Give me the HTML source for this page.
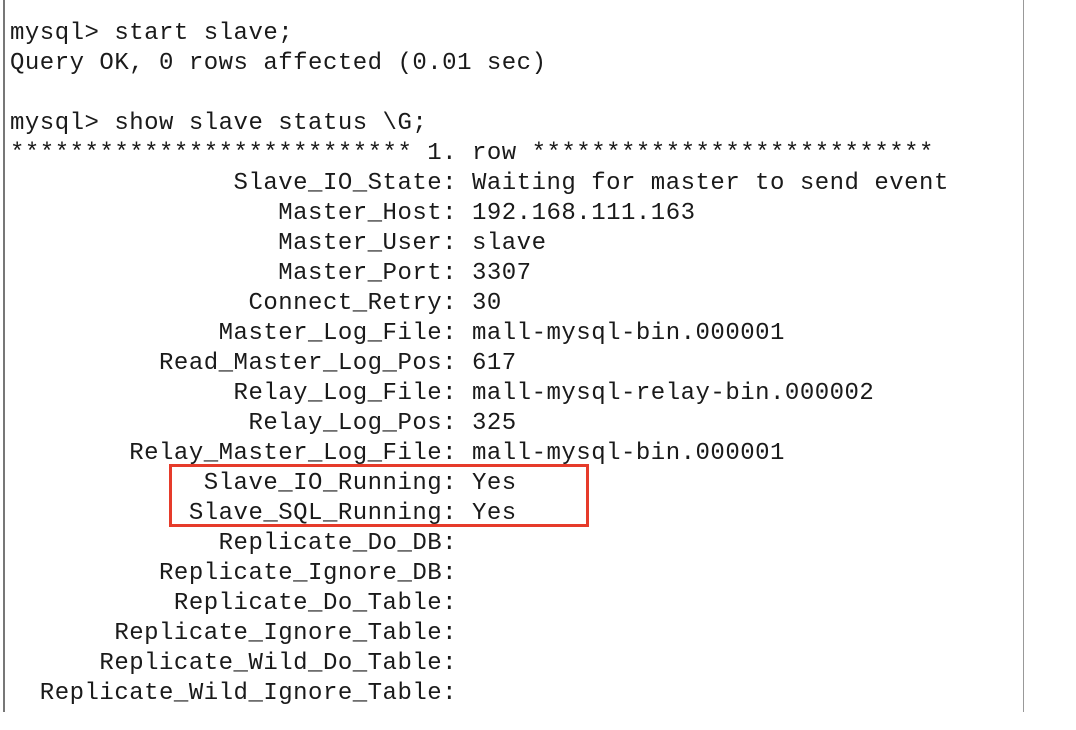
<!DOCTYPE html>
<html><head><style>
html,body{margin:0;padding:0;background:#fff;width:1076px;height:730px;overflow:hidden}
.frame{position:absolute;left:3px;top:0;width:1018px;height:712px;border-left:2px solid #777;border-right:1px solid #999;overflow:hidden}
pre{position:absolute;left:5px;top:19px;margin:0;font-family:"Liberation Mono","DejaVu Sans Mono",monospace;font-size:24px;letter-spacing:0.5px;line-height:30px;color:#1a1a1a}
.box{position:absolute;left:169px;top:464px;width:414px;height:57px;border:3px solid #e63b2a}
</style></head><body>
<div class="frame"><pre>mysql&gt; start slave;
Query OK, 0 rows affected (0.01 sec)

mysql&gt; show slave status \G;
*************************** 1. row ***************************
               Slave_IO_State: Waiting for master to send event
                  Master_Host: 192.168.111.163
                  Master_User: slave
                  Master_Port: 3307
                Connect_Retry: 30
              Master_Log_File: mall-mysql-bin.000001
          Read_Master_Log_Pos: 617
               Relay_Log_File: mall-mysql-relay-bin.000002
                Relay_Log_Pos: 325
        Relay_Master_Log_File: mall-mysql-bin.000001
             Slave_IO_Running: Yes
            Slave_SQL_Running: Yes
              Replicate_Do_DB:
          Replicate_Ignore_DB:
           Replicate_Do_Table:
       Replicate_Ignore_Table:
      Replicate_Wild_Do_Table:
  Replicate_Wild_Ignore_Table:
                   Last_Errno: 0</pre></div>
<div class="box"></div>
</body></html>
